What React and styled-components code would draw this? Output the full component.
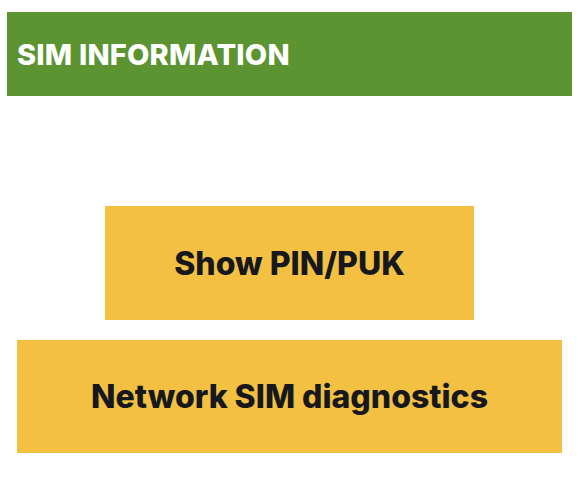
import React from 'react';
import styled, { createGlobalStyle } from 'styled-components';

const GlobalStyle = createGlobalStyle`
  html, body {
    margin: 0;
    padding: 0;
    background: #ffffff;
  }
  body {
    font-family: Inter, "Open Sans", sans-serif;
  }
`;

const Page = styled.div`
  width: 565px;
  margin: 12px 0 0 7px;
  display: flex;
  flex-direction: column;
  align-items: center;
`;

const Header = styled.div`
  align-self: stretch;
  height: 84px;
  background-color: #5b9431;
  display: flex;
  align-items: center;
  padding-left: 10px;
  box-sizing: border-box;
`;

const Title = styled.h1`
  margin: 0;
  color: #ffffff;
  font-size: 29px;
  font-weight: 800;
  letter-spacing: 0.2px;
`;

const ButtonList = styled.div`
  margin-top: 110px;
  display: flex;
  flex-direction: column;
  align-items: center;
  gap: 20px;
  width: 100%;
`;

const ActionButton = styled.button`
  width: ${props => props.wide ? '545px' : '369px'};
  height: ${props => props.wide ? '113px' : '114px'};
  background-color: #f3c042;
  border: none;
  border-radius: 0;
  color: #16181d;
  font-family: Inter, "Open Sans", sans-serif;
  font-size: 32px;
  font-weight: 800;
  cursor: pointer;
  padding: 0;
`;

const App = () => {
  return (
    <>
      <GlobalStyle />
      <Page>
        <Header>
          <Title>SIM INFORMATION</Title>
        </Header>
        <ButtonList>
          <ActionButton>Show PIN/PUK</ActionButton>
          <ActionButton wide>Network SIM diagnostics</ActionButton>
        </ButtonList>
      </Page>
    </>
  );
};

export default App;
